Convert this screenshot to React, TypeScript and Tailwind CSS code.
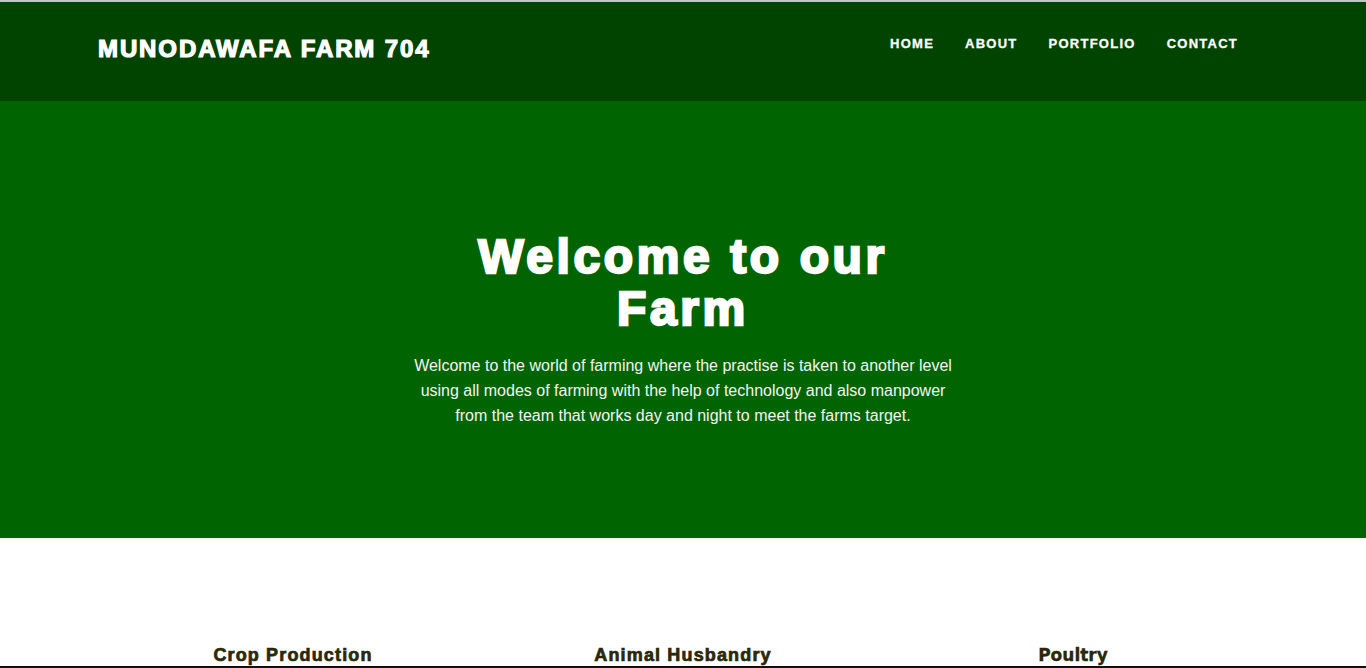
const services = [
  { title: 'Crop Production', font: "font-['Liberation_Sans',Arial,sans-serif] text-[18px] tracking-[1.15px] [-webkit-text-stroke:0.7px_#2a2808]" },
  { title: 'Animal Husbandry', font: "font-['Liberation_Sans',Arial,sans-serif] text-[18px] tracking-[1.15px] [-webkit-text-stroke:0.7px_#2a2808]" },
  { title: 'Poultry', font: "font-['DejaVu_Sans',Verdana,sans-serif] text-[17px] [-webkit-text-stroke:0.3px_#2a2808]" },
]

const links = ['HOME', 'ABOUT', 'PORTFOLIO', 'CONTACT']

export default function App() {
  return (
    <div className="flex flex-col min-h-screen bg-white font-['Liberation_Sans',Arial,sans-serif]">
      <header className="border-t-2 border-[#c4c4c4] bg-[#004400]">
        <div className="w-[1170px] mx-auto h-[99px] flex items-center justify-between pr-[30px]">
          <a href="#" className="text-white text-[24px] font-bold tracking-[1.9px] -mt-[6px] [-webkit-text-stroke:1.2px_white]">
            MUNODAWAFA FARM 704
          </a>
          <nav className="flex items-center gap-[31px] -mt-[15px]">
            {links.map((l) => (
              <a key={l} href="#" className="text-white text-[13px] font-bold tracking-[1.25px] [-webkit-text-stroke:0.3px_white]">
                {l}
              </a>
            ))}
          </nav>
        </div>
      </header>

      <section className="bg-[#006400] h-[437px] flex flex-col items-center pt-[130px]">
        <h1 className="text-white text-[48px] font-bold leading-[52px] tracking-[3.6px] text-center [-webkit-text-stroke:2.4px_white]">
          Welcome to our
          <br />
          Farm
        </h1>
        <p className="mt-[18px] w-[560px] text-center text-[#f4f4f4] text-[16px] leading-[25px]">
          Welcome to the world of farming where the practise is taken to another level using all modes of
          farming with the help of technology and also manpower from the team that works day and night to meet
          the farms target.
        </p>
      </section>

      <section className="bg-white pt-[106px]">
        <div className="w-[1170px] mx-auto grid grid-cols-3">
          {services.map((s) => (
            <h3 key={s.title} className={`text-center font-bold text-[#2a2808] leading-[22px] ${s.font}`}>
              {s.title}
            </h3>
          ))}
        </div>
      </section>

      <section className="bg-[#111111] h-[300px]" />
    </div>
  )
}
